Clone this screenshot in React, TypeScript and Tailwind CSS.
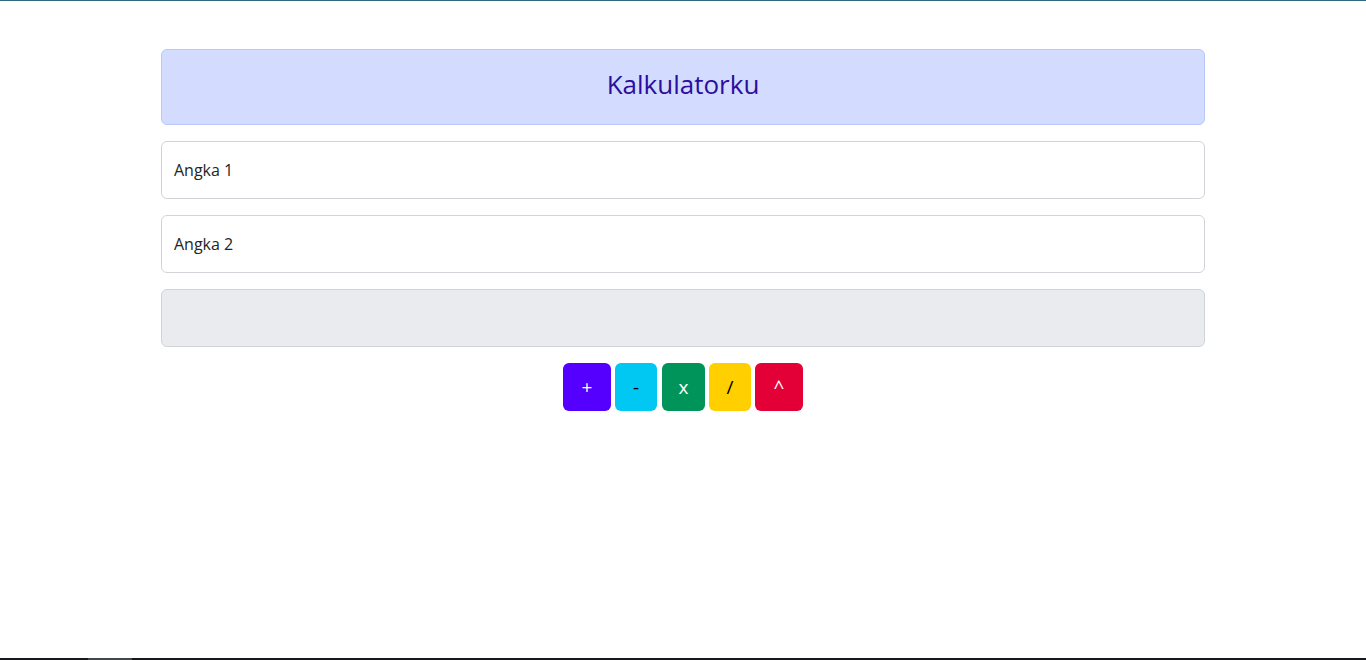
export default function App() {
    const buttons = [
        { label: '+', cls: 'w-[48px] bg-[#5500ff] text-white' },
        { label: '-', cls: 'w-[42px] bg-[#00c8f2] text-black' },
        { label: 'x', cls: 'w-[43px] ml-px bg-[#00945a] text-white' },
        { label: '/', cls: 'w-[42px] bg-[#ffcf00] text-black' },
        { label: '^', cls: 'w-[48px] bg-[#e30036] text-white' },
    ];

    return (
        <div className="w-full h-[660px] flex flex-col bg-white" style={{ fontFamily: '"Open Sans", "Noto Sans", sans-serif' }}>
            {/* top edge */}
            <div className="h-px shrink-0 bg-[#2f6a80]"></div>

            <div className="flex-1 w-[1044px] mx-auto pt-[48px] flex flex-col gap-4">
                <div className="h-[76px] rounded-md border border-[#b8c8fa] bg-[#d3dcff] flex items-center justify-center">
                    <h1 className="mb-[6px] text-[26px] text-[#2c0d9e]">Kalkulatorku</h1>
                </div>

                <input
                    type="text"
                    placeholder="Angka 1"
                    className="h-[58px] w-full rounded-md border border-[#d0d4d9] px-3 text-base text-[#212529] placeholder:text-[#212529] outline-none"
                />
                <input
                    type="text"
                    placeholder="Angka 2"
                    className="h-[58px] w-full rounded-md border border-[#d0d4d9] px-3 text-base text-[#212529] placeholder:text-[#212529] outline-none"
                />
                <input
                    type="text"
                    disabled
                    className="h-[58px] w-full rounded-md border border-[#d0d4d9] bg-[#e9ebef] px-3 text-base outline-none"
                />

                <div className="flex justify-center gap-1">
                    {buttons.map(b => (
                        <button key={b.label} className={`h-[48px] rounded-md text-[19px] flex items-center justify-center ${b.cls}`}>
                            {b.label}
                        </button>
                    ))}
                </div>
            </div>

            {/* bottom bar */}
            <div className="h-[2px] shrink-0 bg-[#16181c] flex">
                <div className="ml-[88px] w-[44px] h-full bg-[#43464b]"></div>
            </div>
        </div>
    );
}
